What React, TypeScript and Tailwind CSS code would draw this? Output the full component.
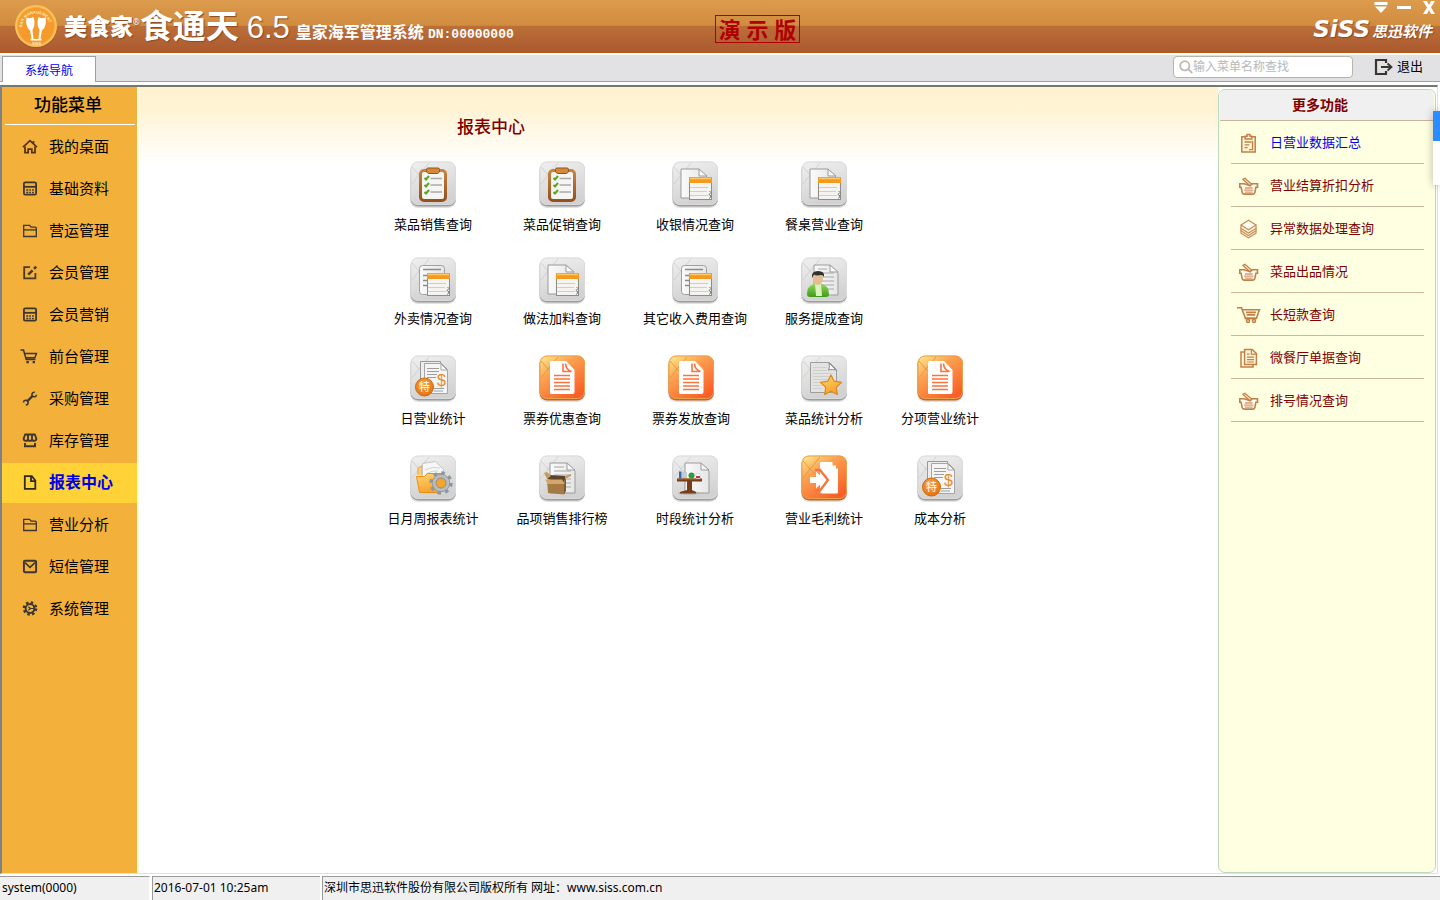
import { useState } from 'react';
import type { ReactNode } from 'react';

type TileKind =
  | 'checklist'
  | 'listSheet'
  | 'docSheet'
  | 'waiter'
  | 'special'
  | 'voucher'
  | 'star'
  | 'folder'
  | 'box'
  | 'table'
  | 'export';

interface ReportItem {
  label: string;
  icon: TileKind;
}

interface ReportRow {
  layout: string;
  gap: string;
  items: ReportItem[];
}

const menuItems = [
  { label: '我的桌面', icon: 'home' },
  { label: '基础资料', icon: 'calc' },
  { label: '营运管理', icon: 'folder' },
  { label: '会员管理', icon: 'edit' },
  { label: '会员营销', icon: 'calc' },
  { label: '前台管理', icon: 'cart' },
  { label: '采购管理', icon: 'wrench' },
  { label: '库存管理', icon: 'store' },
  { label: '报表中心', icon: 'file' },
  { label: '营业分析', icon: 'folder' },
  { label: '短信管理', icon: 'mail' },
  { label: '系统管理', icon: 'gear' },
];

const reportRows: ReportRow[] = [
  {
    layout: 'grid-cols-[128px_130px_136px_122px]',
    gap: 'gap-2',
    items: [
      { label: '菜品销售查询', icon: 'checklist' },
      { label: '菜品促销查询', icon: 'checklist' },
      { label: '收银情况查询', icon: 'docSheet' },
      { label: '餐桌营业查询', icon: 'docSheet' },
    ],
  },
  {
    layout: 'mt-6 grid-cols-[128px_130px_136px_122px]',
    gap: 'gap-1.5',
    items: [
      { label: '外卖情况查询', icon: 'listSheet' },
      { label: '做法加料查询', icon: 'docSheet' },
      { label: '其它收入费用查询', icon: 'listSheet' },
      { label: '服务提成查询', icon: 'waiter' },
    ],
  },
  {
    layout: 'mt-7 grid-cols-[128px_130px_128px_138px_94px]',
    gap: 'gap-2',
    items: [
      { label: '日营业统计', icon: 'special' },
      { label: '票券优惠查询', icon: 'voucher' },
      { label: '票券发放查询', icon: 'voucher' },
      { label: '菜品统计分析', icon: 'star' },
      { label: '分项营业统计', icon: 'voucher' },
    ],
  },
  {
    layout: 'mt-7 grid-cols-[128px_130px_136px_122px_110px]',
    gap: 'gap-2',
    items: [
      { label: '日月周报表统计', icon: 'folder' },
      { label: '品项销售排行榜', icon: 'box' },
      { label: '时段统计分析', icon: 'table' },
      { label: '营业毛利统计', icon: 'export' },
      { label: '成本分析', icon: 'special' },
    ],
  },
];

const moreItems = [
  { label: '日营业数据汇总', icon: 'clipboard' },
  { label: '营业结算折扣分析', icon: 'basket' },
  { label: '异常数据处理查询', icon: 'layers' },
  { label: '菜品出品情况', icon: 'basket' },
  { label: '长短款查询', icon: 'cart' },
  { label: '微餐厅单据查询', icon: 'copy' },
  { label: '排号情况查询', icon: 'basket' },
];

const menuIcons: Record<string, ReactNode> = {
  home: (
    <g fill="none" stroke="#54300f" strokeWidth="1.7">
      <path d="M1 8.6 8 2.2l7 6.4M11.5 2.5v2.5" />
      <path d="M3 8v6.2h3.2v-3.6h3.6v3.6H13V8" />
    </g>
  ),
  calc: (
    <g fill="none" stroke="#3a3632" strokeWidth="1.8">
      <rect x="1.9" y="1.9" width="12.2" height="12.2" rx="1.4" />
      <path d="M2 6.3h12" />
      <path d="M4.3 9.5h2m1 0h1.6m1.2 0h1.7M4.3 12h2m1 0h1.6m1.2 0h1.7" strokeWidth="1.4" />
    </g>
  ),
  folder: (
    <g fill="none" stroke="#3a3632" strokeWidth="1.3">
      <path d="M1.7 14V2.8h6l1.4 1.8h4.1q1.1 0 1.1 1V14z" />
      <path d="M2 7.4h12" />
    </g>
  ),
  edit: (
    <g fill="none" stroke="#4a3a24" strokeWidth="1.8">
      <path d="M8 2.6H2.2v11.2h11.2V8.6" />
      <path d="m6.2 10.2 4.4-4.4M12 4.4l2.2-2.2" strokeWidth="2.6" />
    </g>
  ),
  cart: (
    <g fill="none" stroke="#3a3632" strokeWidth="1.5">
      <path d="M-1.5 1.6h3L4.2 11h9.2M2.8 5h11.6l-1.5 4.2H4" />
      <path d="M4.4 13.6h2.4M10.6 13.6H13" strokeWidth="2.2" />
    </g>
  ),
  wrench: (
    <g fill="none" stroke="#3a3632" strokeWidth="1.5">
      <path d="m5 11 6-6" strokeWidth="2.4" />
      <path d="M12.800 1.800a2.300 2.300 0 1 0 1.700 2.400M1.500 12a2.300 2.300 0 1 1 2.300 2.400" />
    </g>
  ),
  store: (
    <g fill="none" stroke="#3a3632" strokeWidth="1.8">
      <path d="M3.200 2h9.600l1.600 4.200q-.2 2.200-2.200 2.200T10 6.400q-.2 2-2 2t-2-2q-.2 2-2.200 2T1.600 6.200zM6 2v4.400M10 2v4.400" />
      <path d="M3 10.400v3.400h10v-3.400" strokeWidth="2" />
    </g>
  ),
  file: (
    <g fill="none" stroke="#2f2a26" strokeWidth="1.8">
      <path d="M2.8 1.7h7L13.3 6v8.3H2.8z" />
      <path d="M9 2v4.6h4" />
    </g>
  ),
  mail: (
    <g fill="none" stroke="#3a3632" strokeWidth="1.9">
      <rect x="1.9" y="2.3" width="12.2" height="11.4" rx="1" />
      <path d="M3 4.200 8 8.800l5-4.600" strokeWidth="1.6" />
    </g>
  ),
  gear: (
    <g fill="none" stroke="#3a3632">
      <circle cx="8" cy="8" r="6.2" strokeWidth="2.2" strokeDasharray="2.5 2.37" />
      <circle cx="8" cy="8" r="4.4" strokeWidth="2" />
      <path d="M6.4 6.2 8.4 8l-2 1.8M8.2 8H12" strokeWidth="1.2" />
    </g>
  ),
};

const moreIcons: Record<string, ReactNode> = {
  clipboard: (
    <g fill="none" stroke="#c47f45" strokeWidth="1.5">
      <path d="M2.800 3.800h13.400v15.200H2.800z" fill="#fff6d8" />
      <path d="M6.200 6V3.200h1.800V1.400h3v1.800h1.800V6z" fill="#fff6d8" />
      <path d="M5.600 9h7M5.600 11.800h4.800M5.600 14.600h3M13.600 8v8.600H10" strokeWidth="1.300" />
    </g>
  ),
  basket: (
    <g fill="none" stroke="#c47f45" strokeWidth="1.6">
      <path d="M5 7.800H.8v3.400h1.300l1 5.200q.3 1.700 2 1.700h8.800q1.700 0 2-1.700l1-5.200h1.600V7.800h-5.500L11 9.500z" fill="#fffdf0" />
      <path d="m4 3.400 2-1.200 6.600 6L11 9.800z" fill="#fff6d8" strokeWidth="1.300" />
      <path d="M6 12h7.600M5 14.200h9.400M6 16.200h7.600" stroke="#d79a76" strokeWidth="1.300" />
    </g>
  ),
  layers: (
    <g fill="#fff6d8" stroke="#c98a55" strokeWidth="1.2" strokeLinejoin="round">
      <path d="M2 11.500v2.700l7.500 4.600 7.500-4.600v-2.700z" />
      <path d="M2 9v2.800l7.500 4.600 7.500-4.600V9z" />
      <path d="M2 6v3.400L9.500 14 17 9.400V6z" />
      <path d="M9.500 1.200 17 6l-7.500 4.800L2 6z" fill="#fffef4" />
    </g>
  ),
  cart: (
    <g fill="none" stroke="#c47f45" strokeWidth="1.6">
      <path d="M-2 2.800h4.500L6.400 13.400h10" />
      <path d="M3.200 4.800h17.200l-3 8.600H6.200" />
      <path d="M7 7.400h10M7.600 9.800h8.600" strokeWidth="1.800" />
      <circle cx="9" cy="16" r="1.500" />
      <circle cx="15" cy="16" r="1.500" />
    </g>
  ),
  copy: (
    <g fill="none" stroke="#c47f45" strokeWidth="1.5">
      <path d="M5.500 4H2v15h12v-2.500" />
      <path d="M5.600 1.500h7.600l4.200 4v11H5.600z" fill="#fff6d8" />
      <path d="M12.400 1.800v4.400h4.600M8 6.200h2.600M8 9.200h7M8 11.600h7M8 14h7" strokeWidth="1.200" />
    </g>
  ),
};

function Paper({ x = 10, right = 36, bottom = 37, lines = false }: { x?: number; right?: number; bottom?: number; lines?: boolean }) {
  return (
    <g stroke="#9b9b9b" strokeWidth="1">
      <path d={`M${x} 8H${right - 8}l8 8V${bottom}H${x}z`} fill="url(#paper)" />
      <path d={`M${right - 8} 8v7h8z`} fill="#f7f7f7" />
      {lines &&
        [12, 16, 20, 24, 28, 32].map((y) => (
          <path key={y} d={`M${x + 4} ${y}H${y < 16 ? right - 11 : right - 4}`} stroke="#a8a8a8" />
        ))}
    </g>
  );
}

function Sheet() {
  return (
    <g>
      <rect x="17.500" y="16.500" width="22" height="22" fill="#f6f4f1" stroke="#8f8b86" />
      <path d="M17 16h23v6H17z" fill="#f39a1f" />
      <path d="M18 17.500h21" stroke="#fdc766" strokeWidth="1.500" />
      <path d="M18 26.500h18M18 30.500h17M18 34.500h18" stroke="#d3cec8" />
      <path d="m37.500 30 1.500 1.500-2 2 2 1.500-1.500 2.500" fill="none" stroke="#6f6f6f" />
    </g>
  );
}

const tileArt: Record<TileKind, ReactNode> = {
  checklist: (
    <g>
      <rect x="10.500" y="9.500" width="25" height="30" rx="3.500" fill="#f5f5f3" stroke="url(#wood)" strokeWidth="3" />
      <path d="M16.500 8.500q0-1.500 1.500-1.500h10q1.500 0 1.500 1.500V11l-2 1.500h-9l-2-1.500z" fill="#d58a3a" stroke="#8f5620" />
      <path d="m14.500 17 1.500 1.500 3-3.500m-4.500 9 1.500 1.500 3-3.500m-4.500 9 1.500 1.500 3-3.500" fill="none" stroke="#5aa524" strokeWidth="2" />
      <path d="M20.500 17.500h11.500m-11.500 6.500h11.500m-11.500 7h11.500" stroke="#a9a9a9" strokeWidth="1.500" />
    </g>
  ),
  listSheet: (
    <g>
      <rect x="9.500" y="8.500" width="25" height="29" rx="3" fill="url(#paper)" stroke="#a0a0a0" />
      <path d="M13 12.500h18M13 18.500h5M13 23.500h5M13 28.500h5" stroke="#8c8c8c" strokeWidth="1.300" />
      <Sheet />
    </g>
  ),
  docSheet: (
    <g>
      <Paper x={9} right={35} />
      <Sheet />
    </g>
  ),
  waiter: (
    <g>
      <Paper x={13} right={37} bottom={38} lines />
      <path d="M6 37q0-8 7-10h8q7 2 7 10 0 3-3 3H9q-3 0-3-3z" fill="url(#green)" />
      <path d="M14 27h6l1 12h-6z" fill="#d9f3bd" />
      <ellipse cx="17" cy="22" rx="5" ry="6" fill="#e6bd92" />
      <path d="M11 21q-1-7 6-7t6 6q-1-2-3-2-5 1-7-.500z" fill="#30332c" />
    </g>
  ),
  special: (
    <g>
      <path d="M10.500 6.500h20v29h-20z" fill="#ededed" stroke="#999" />
      <path d="M14.500 8.500h17l6 6v24h-23z" fill="#f5f5f5" stroke="#a5a5a5" />
      <path d="M31 9v6h6z" fill="#fff" stroke="#a5a5a5" />
      <path d="M17 13.500h12M17 16.500h12M17 19.500h10M17 22.500h9M24 33.500h10M24 36h9" stroke="#9d9d9d" />
      <text x="27" y="31" className="font-['Liberation_Sans'] text-[16px] font-medium" fill="#e88b25">$</text>
      <circle cx="14.500" cy="32" r="9" fill="url(#ball)" stroke="#d06a0a" />
      <text x="9" y="36" className="font-['Noto_Sans_CJK_SC'] text-[11px]" fill="#fff">特</text>
    </g>
  ),
  voucher: (
    <g>
      <path d="M12.500 6H27l8.500 9v22q0 2-2 2h-21q-1.500 0-1.500-1.500v-30Q11 6 12.500 6z" fill="#fff" />
      <path d="M24 8.500v8h8.500q-5.500-1.500-6-8" fill="#fff" stroke="#f9733c" strokeWidth="1.600" />
      <path d="M15 20.500h16M15 24h16M15 27.500h16M15 31h16M15 34.500h16" stroke="#f9733c" strokeWidth="1.500" />
    </g>
  ),
  star: (
    <g>
      <path d="M9.500 7.500h19l7 7v23h-26z" fill="#e3e4e2" stroke="#9c9f9b" />
      <path d="M28 8q1 6-1 7 5-1 8 0z" fill="#f8f8f8" stroke="#8b8b8b" />
      <path d="M12 12.500h14M12 15.500h14M12 18.500h20M12 21.500h20M12 24.500h16M12 27.500h9M12 30.500h9M12 33.500h9" stroke="#cfd0ce" />
      <path d="m30 20 3.200 6.200 7.300 1.200-5.200 5 1 7.100-6.300-3.200-6.300 3.200 1-7.100-5.200-5 7.300-1.200z" fill="url(#gold)" stroke="#d98a1d" strokeWidth="1.200" strokeLinejoin="round" />
    </g>
  ),
  folder: (
    <g>
      <path d="M8 20v-7l4-2v9" fill="#ffd277" stroke="#e8a53a" />
      <path d="m12.500 8.500 13-2 8 8v12h-21z" fill="#f7f7f7" stroke="#c5c5c5" />
      <path d="M15 15q8-4 15-2m-14 6q6-4 12-3" fill="none" stroke="#d2d2d2" />
      <path d="M6.500 21.500h8l3-3h15l-2 19h-21z" fill="url(#gold)" stroke="#ee8d13" />
      <circle cx="31" cy="28" r="10" fill="none" stroke="#8d979e" strokeWidth="3.500" strokeDasharray="3.500 4.350" />
      <circle cx="31" cy="28" r="7" fill="#f5a42d" stroke="#b6bdc2" strokeWidth="3.500" />
      <circle cx="31" cy="28" r="8.800" fill="none" stroke="#7f8990" strokeWidth=".7" />
      <circle cx="31" cy="28" r="5" fill="none" stroke="#7f8990" strokeWidth=".8" />
    </g>
  ),
  box: (
    <g>
      <Paper x={11} right={36} bottom={38} lines />
      <path d="m8 25 17 3v11.500L9 38z" fill="#a67a45" />
      <path d="m25 28 2-6v14l-2 3.500z" fill="#7d5830" />
      <path d="m8 24 3-4 15 1v3l-1 4z" fill="#5e4325" />
      <path d="M6 24.500h17l3 4.500H9z" fill="#d2a76c" />
      <path d="m5 18 3-1 4 4-4 3z" fill="#c79b60" />
      <path d="m26 24 6-3v-2l-6 2z" fill="#c79b60" />
    </g>
  ),
  table: (
    <g>
      <Paper x={13} right={37} bottom={38} />
      <ellipse cx="17" cy="38" rx="11" ry="1.800" fill="#b5b5b5" />
      <path d="M5 23.500h25v3H5zM15 26h5v9l4 2v1.500H8V37l7-2z" fill="#7b3d19" />
      <path d="M6 24h23" stroke="#b5672f" />
      <path d="M7 16.500h2.500v7H7z" fill="#2a6fb5" />
      <path d="M10 17h5v6h-5z" fill="#c4ccd1" />
      <circle cx="19.500" cy="20.500" r="3" fill="#2f9b3c" />
      <path d="M24 18.500h4v5h-4z" fill="#fff" stroke="#c8c8c8" strokeWidth=".6" />
      <path d="M24 21h4v2h-4z" fill="#c9354a" />
    </g>
  ),
  export: (
    <g>
      <path d="M20 7h11.500v3.500H35v3h2V37q0 1.500-1.500 1.500h-14q-2.500 0-2.500-2V8q0-1 1-1z" fill="#fff" />
      <path d="M14 15h5l8 10-8 10.500h-5" fill="none" stroke="#f9733c" strokeWidth="2.300" />
      <path d="M9 22h6v-5.500l8.500 8.500-8.500 8.500V28H9z" fill="#fff" />
    </g>
  ),
};

function SharedGradients() {
  return (
    <svg className="absolute h-0 w-0" aria-hidden="true">
      <defs>
        <linearGradient id="tileGray" x1="0" y1="0" x2="0.300" y2="1">
          <stop offset="0" stopColor="#f0f0f0" />
          <stop offset="1" stopColor="#d2d2d2" />
        </linearGradient>
        <linearGradient id="tileOrange" x1="0" y1="0" x2="0.700" y2="1">
          <stop offset="0" stopColor="#ffef92" />
          <stop offset="0.400" stopColor="#fba050" />
          <stop offset="1" stopColor="#f95f28" />
        </linearGradient>
        <linearGradient id="paper" x1="0" y1="0" x2="1" y2="0">
          <stop offset="0" stopColor="#fafafa" />
          <stop offset="1" stopColor="#e6e6e6" />
        </linearGradient>
        <linearGradient id="wood" x1="0" y1="0" x2="0" y2="1">
          <stop offset="0" stopColor="#c8843f" />
          <stop offset="1" stopColor="#95501c" />
        </linearGradient>
        <linearGradient id="green" x1="0" y1="0" x2="0" y2="1">
          <stop offset="0" stopColor="#8fd653" />
          <stop offset="1" stopColor="#3f9a1b" />
        </linearGradient>
        <linearGradient id="gold" x1="0" y1="0" x2="0.400" y2="1">
          <stop offset="0" stopColor="#ffd874" />
          <stop offset="1" stopColor="#f8a22c" />
        </linearGradient>
        <radialGradient id="ball" cx="0.450" cy="0.350" r="0.700">
          <stop offset="0" stopColor="#f9a948" />
          <stop offset="1" stopColor="#e46c0c" />
        </radialGradient>
      </defs>
    </svg>
  );
}

function ReportTile({ icon }: { icon: TileKind }) {
  const orange = icon === 'voucher' || icon === 'export';

  return (
    <svg viewBox="0 0 46 46" className="h-[46px] w-[46px] overflow-visible" aria-hidden="true">
      <rect x="0" y="3" width="46" height="44" rx="8" fill="#000" opacity="0.120" />
      <rect x="0.500" y="2" width="45.500" height="43.500" rx="8" fill={orange ? '#c4642a' : '#9c9c9c'} />
      <rect x="0.500" y="0.500" width="45.500" height="43.500" rx="7.500" fill={orange ? 'url(#tileOrange)' : 'url(#tileGray)'} />
      <rect x="1" y="1" width="44.500" height="42.500" rx="7" fill="none" stroke={orange ? '#e9a04a' : '#dadada'} />
      <path
        d="m2 23 7-9L2 6m7 8 10-12M9 14l8 8"
        fill="none"
        stroke={orange ? '#e8973e' : '#d2d2d2'}
      />
      {tileArt[icon]}
    </svg>
  );
}

function BrandBadge() {
  return (
    <svg viewBox="0 0 44 44" className="h-11 w-11" aria-hidden="true">
      <circle cx="22" cy="23" r="21" fill="#8b4214" opacity="0.350" />
      <circle cx="22" cy="22" r="21" fill="#fbc15c" />
      <circle cx="22" cy="22" r="18.500" fill="#f59a2b" stroke="#f7a93c" />
      <path id="badgeArc" d="M8 23.500a14 14 0 0 1 28 0" fill="none" />
      <text className="font-['Liberation_Sans'] text-[4px] font-bold" fill="#ffe9bd">
        <textPath href="#badgeArc" startOffset="0">BAR MANAGEMENT</textPath>
      </text>
      <path d="M12.500 13.500q4 1.500 7-.5 2.500 8-1 13l1 9h3.500v1.500h-6.500V35l1-.5-1.500-8q-5-4-3.500-13z" fill="#fff" />
      <path d="M31.500 13.500q-4 1.500-7-.5-2.500 8 1 13l-1 9H21v1.500h6.500V35l-1-.5 1.500-8q5-4 3.500-13z" fill="#fff" />
      <text x="18" y="40.500" className="font-['Liberation_Sans'] text-[4px] font-bold" fill="#ffe9bd">SISS</text>
    </svg>
  );
}

function Header() {
  return (
    <header className="flex h-[53px] shrink-0 items-stretch border-b border-[#b3560f] bg-[linear-gradient(#dd9b4d_0,#d08c3f_48%,#cc833c_50%,#bd6f38_50%,#aa5a30_100%)] text-white">
      <div className="flex w-[715px] shrink-0 items-center pl-3.5">
        <BrandBadge />
        <h1 className="flex items-center whitespace-nowrap [text-shadow:1px_1px_1px_#8a4a20]">
          <span className="ml-1.5 text-[23px] font-black">美食家</span>
          <sup className="-top-1 text-[8px]">®</sup>
          <span className="text-[33px] leading-10 font-bold">食通天</span>
          <span className="ml-2 pt-1 font-['Liberation_Sans'] text-[31px] leading-10">6.5</span>
        </h1>
        <p className="ml-1.5 pt-[14px] text-base leading-6 font-bold whitespace-nowrap">
          皇家海军管理系统 <span className="font-['Liberation_Mono'] text-[13px]">DN:00000000</span>
        </p>
      </div>
      <div className="flex items-start pt-[15px]">
        <span className="flex h-7 w-[85px] items-center justify-center border border-[#b00000] text-[22px] font-bold whitespace-pre text-[#b00000]">
          演 示 版
        </span>
      </div>
      <div className="flex flex-1 flex-col items-end pr-1">
        <div className="flex h-[15px] gap-2">
          <button type="button" aria-label="菜单" className="h-[15px] w-4">
            <svg viewBox="0 0 16 15" fill="#fff">
              <path d="M2.500 2h13v3h-13zM3 6.500h12L9 13z" />
            </svg>
          </button>
          <button type="button" aria-label="最小化" className="h-[15px] w-4">
            <svg viewBox="0 0 16 15" fill="#fff">
              <path d="M1 6h14v3H1z" />
            </svg>
          </button>
          <button type="button" aria-label="关闭" className="h-[15px] w-4">
            <svg viewBox="0 0 16 15" fill="#fff">
              <path d="M3 1h4l2 4 2-4h4l-4 6.500 4 6.500h-4L9 10l-2 4H3l4-6.500z" />
            </svg>
          </button>
        </div>
        <div className="flex items-center gap-0.5 pr-1 italic [text-shadow:1px_1px_1px_#8a4a20]">
          <span className="font-['DejaVu_Sans'] text-[23px] leading-6 font-bold">SiSS</span>
          <span className="pt-1 text-[15px] leading-6 font-bold">思迅软件</span>
        </div>
      </div>
    </header>
  );
}

function TabStrip() {
  return (
    <div className="mt-0.5 flex h-[27px] shrink-0 items-end justify-between border-b border-[#a0a0a0] bg-[#e2e2e4] pl-0.5">
      <button
        type="button"
        className="-mb-px h-[26px] w-[94px] border border-b-0 border-[#a0a0a0] bg-white pt-0.5 text-xs text-[#0000f0]"
      >
        系统导航
      </button>
      <div className="flex h-full items-center pr-[17px] pb-0.5">
        <label className="flex h-[22px] w-[180px] items-center rounded-[4px] border border-[#b9b4a8] bg-white pl-[5px]">
          <svg viewBox="0 0 14 14" className="h-3.5 w-3.5 shrink-0" fill="none" stroke="#bdb9b4" strokeWidth="1.800">
            <circle cx="5.800" cy="5.800" r="4.600" />
            <path d="m9.200 9.200 4 3.800" />
          </svg>
          <input
            type="text"
            aria-label="输入菜单名称查找"
            placeholder="输入菜单名称查找"
            className="w-full min-w-0 bg-transparent text-xs text-black outline-none placeholder:text-[#b8b8b8]"
          />
        </label>
        <button type="button" className="ml-5 flex items-center gap-1 text-[13px] text-black">
          <svg viewBox="0 0 20 18" className="h-[18px] w-5" fill="none" stroke="#3b352f" strokeWidth="2.200">
            <path d="M13 5V2H3v14h10v-3" />
            <path d="M8 9h10M14.500 5.500 18.500 9l-4 3.500" strokeWidth="1.800" />
          </svg>
          退出
        </button>
      </div>
    </div>
  );
}

function Sidebar({ active, onSelect }: { active: string; onSelect: (label: string) => void }) {
  return (
    <nav className="w-[137px] shrink-0 border-r-2 border-[#fffbdc] bg-[#f3b13c]">
      <h2 className="mr-0.5 ml-[3px] h-[38px] border-b border-white pr-1 text-center text-[17px] leading-9 font-medium">
        功能菜单
      </h2>
      <ul className="mt-0.5 space-y-0.5">
        {menuItems.map((item) => (
          <li key={item.label}>
            <button
              type="button"
              onClick={() => onSelect(item.label)}
              className={`flex h-10 w-full items-center gap-[11px] pb-0.5 pl-5 ${
                item.label === active ? 'bg-[#ffd237] text-base font-bold text-[#0000f0]' : 'text-[15px] text-black'
              }`}
            >
              <svg viewBox="0 0 16 15" className="h-4 w-4 overflow-visible" aria-hidden="true">
                {menuIcons[item.icon]}
              </svg>
              {item.label}
            </button>
          </li>
        ))}
      </ul>
    </nav>
  );
}

function ReportCenter() {
  return (
    <main className="min-w-0 flex-1 bg-[linear-gradient(#fff2d0_0,#fff3d4_22px,#fffaec_52px,#ffffff_78px)] pl-[230px]">
      <h2 className="pt-7 pl-[88px] text-[17px] leading-6 font-medium text-[#800000]">报表中心</h2>
      <div className="mt-[22px]">
        {reportRows.map((row) => (
          <div key={row.items[0].label} className={`grid ${row.layout}`}>
            {row.items.map((item) => (
              <button
                key={item.label}
                type="button"
                className={`flex flex-col items-center text-[13px] leading-[18px] whitespace-nowrap text-black ${row.gap}`}
              >
                <ReportTile icon={item.icon} />
                {item.label}
              </button>
            ))}
          </div>
        ))}
      </div>
    </main>
  );
}

function MorePanel() {
  return (
    <aside className="mt-0.5 mr-px w-[218px] shrink-0 rounded-[7px] border border-[#bcd8bc] bg-[#ffffe1]">
      <h2 className="mx-px h-[31px] rounded-t-[6px] border-b border-[#ccb59c] bg-[#f0f0f0] pr-3.5 text-center text-sm leading-[30px] font-bold text-[#800000]">
        更多功能
      </h2>
      <ul className="mr-[11px] ml-3">
        {moreItems.map((item, index) => (
          <li key={item.label} className="h-[43px] border-b border-[#c9b7a2]">
            <a
              href="#"
              className={`flex h-full items-center gap-[11px] pt-0.5 pl-2 text-[13px] ${
                index === 0 ? 'text-[#0000f0]' : 'text-[#800000]'
              }`}
            >
              <svg viewBox="0 0 20 20" className="h-5 w-5 shrink-0 overflow-visible" aria-hidden="true">
                {moreIcons[item.icon]}
              </svg>
              {item.label}
            </a>
          </li>
        ))}
      </ul>
    </aside>
  );
}

function StatusBar() {
  return (
    <footer className="mt-0.5 flex h-6 shrink-0 gap-0.5 bg-white text-xs leading-[22px] whitespace-nowrap text-black">
      <span className="w-[150px] border-t border-r border-t-[#9a9a9a] border-r-white bg-[#f0f0f0] pl-0.5">system(0000)</span>
      <span className="w-[168px] border-t border-l border-[#9a9a9a] bg-[#f0f0f0] pl-px">2016-07-01 10:25am</span>
      <span className="flex-1 border-t border-l border-[#9a9a9a] bg-[#f0f0f0] pl-px">
        深圳市思迅软件股份有限公司版权所有 网址：www.siss.com.cn
      </span>
    </footer>
  );
}

export default function App() {
  const [active, setActive] = useState('报表中心');

  return (
    <div className="relative flex min-h-screen flex-col overflow-hidden bg-white font-['Noto_Sans','Noto_Sans_CJK_SC',sans-serif]">
      <SharedGradients />
      <Header />
      <TabStrip />
      <div className="mt-[3px] mr-0.5 flex flex-1 border-t-2 border-r border-b border-l-2 border-t-[#75786f] border-r-[#e0e0e0] border-b-[#e0e0e0] border-l-[#7d8288]">
        <Sidebar active={active} onSelect={setActive} />
        <ReportCenter />
        <MorePanel />
      </div>
      <StatusBar />
      {/* docked helper handle on the window edge */}
      <div className="absolute top-[111px] right-0 w-[7px] bg-white shadow-[0_0_8px_rgba(0,0,0,0.300)]">
        <div className="h-[30px] bg-[#2b8cff]" />
        <div className="h-11" />
      </div>
    </div>
  );
}
